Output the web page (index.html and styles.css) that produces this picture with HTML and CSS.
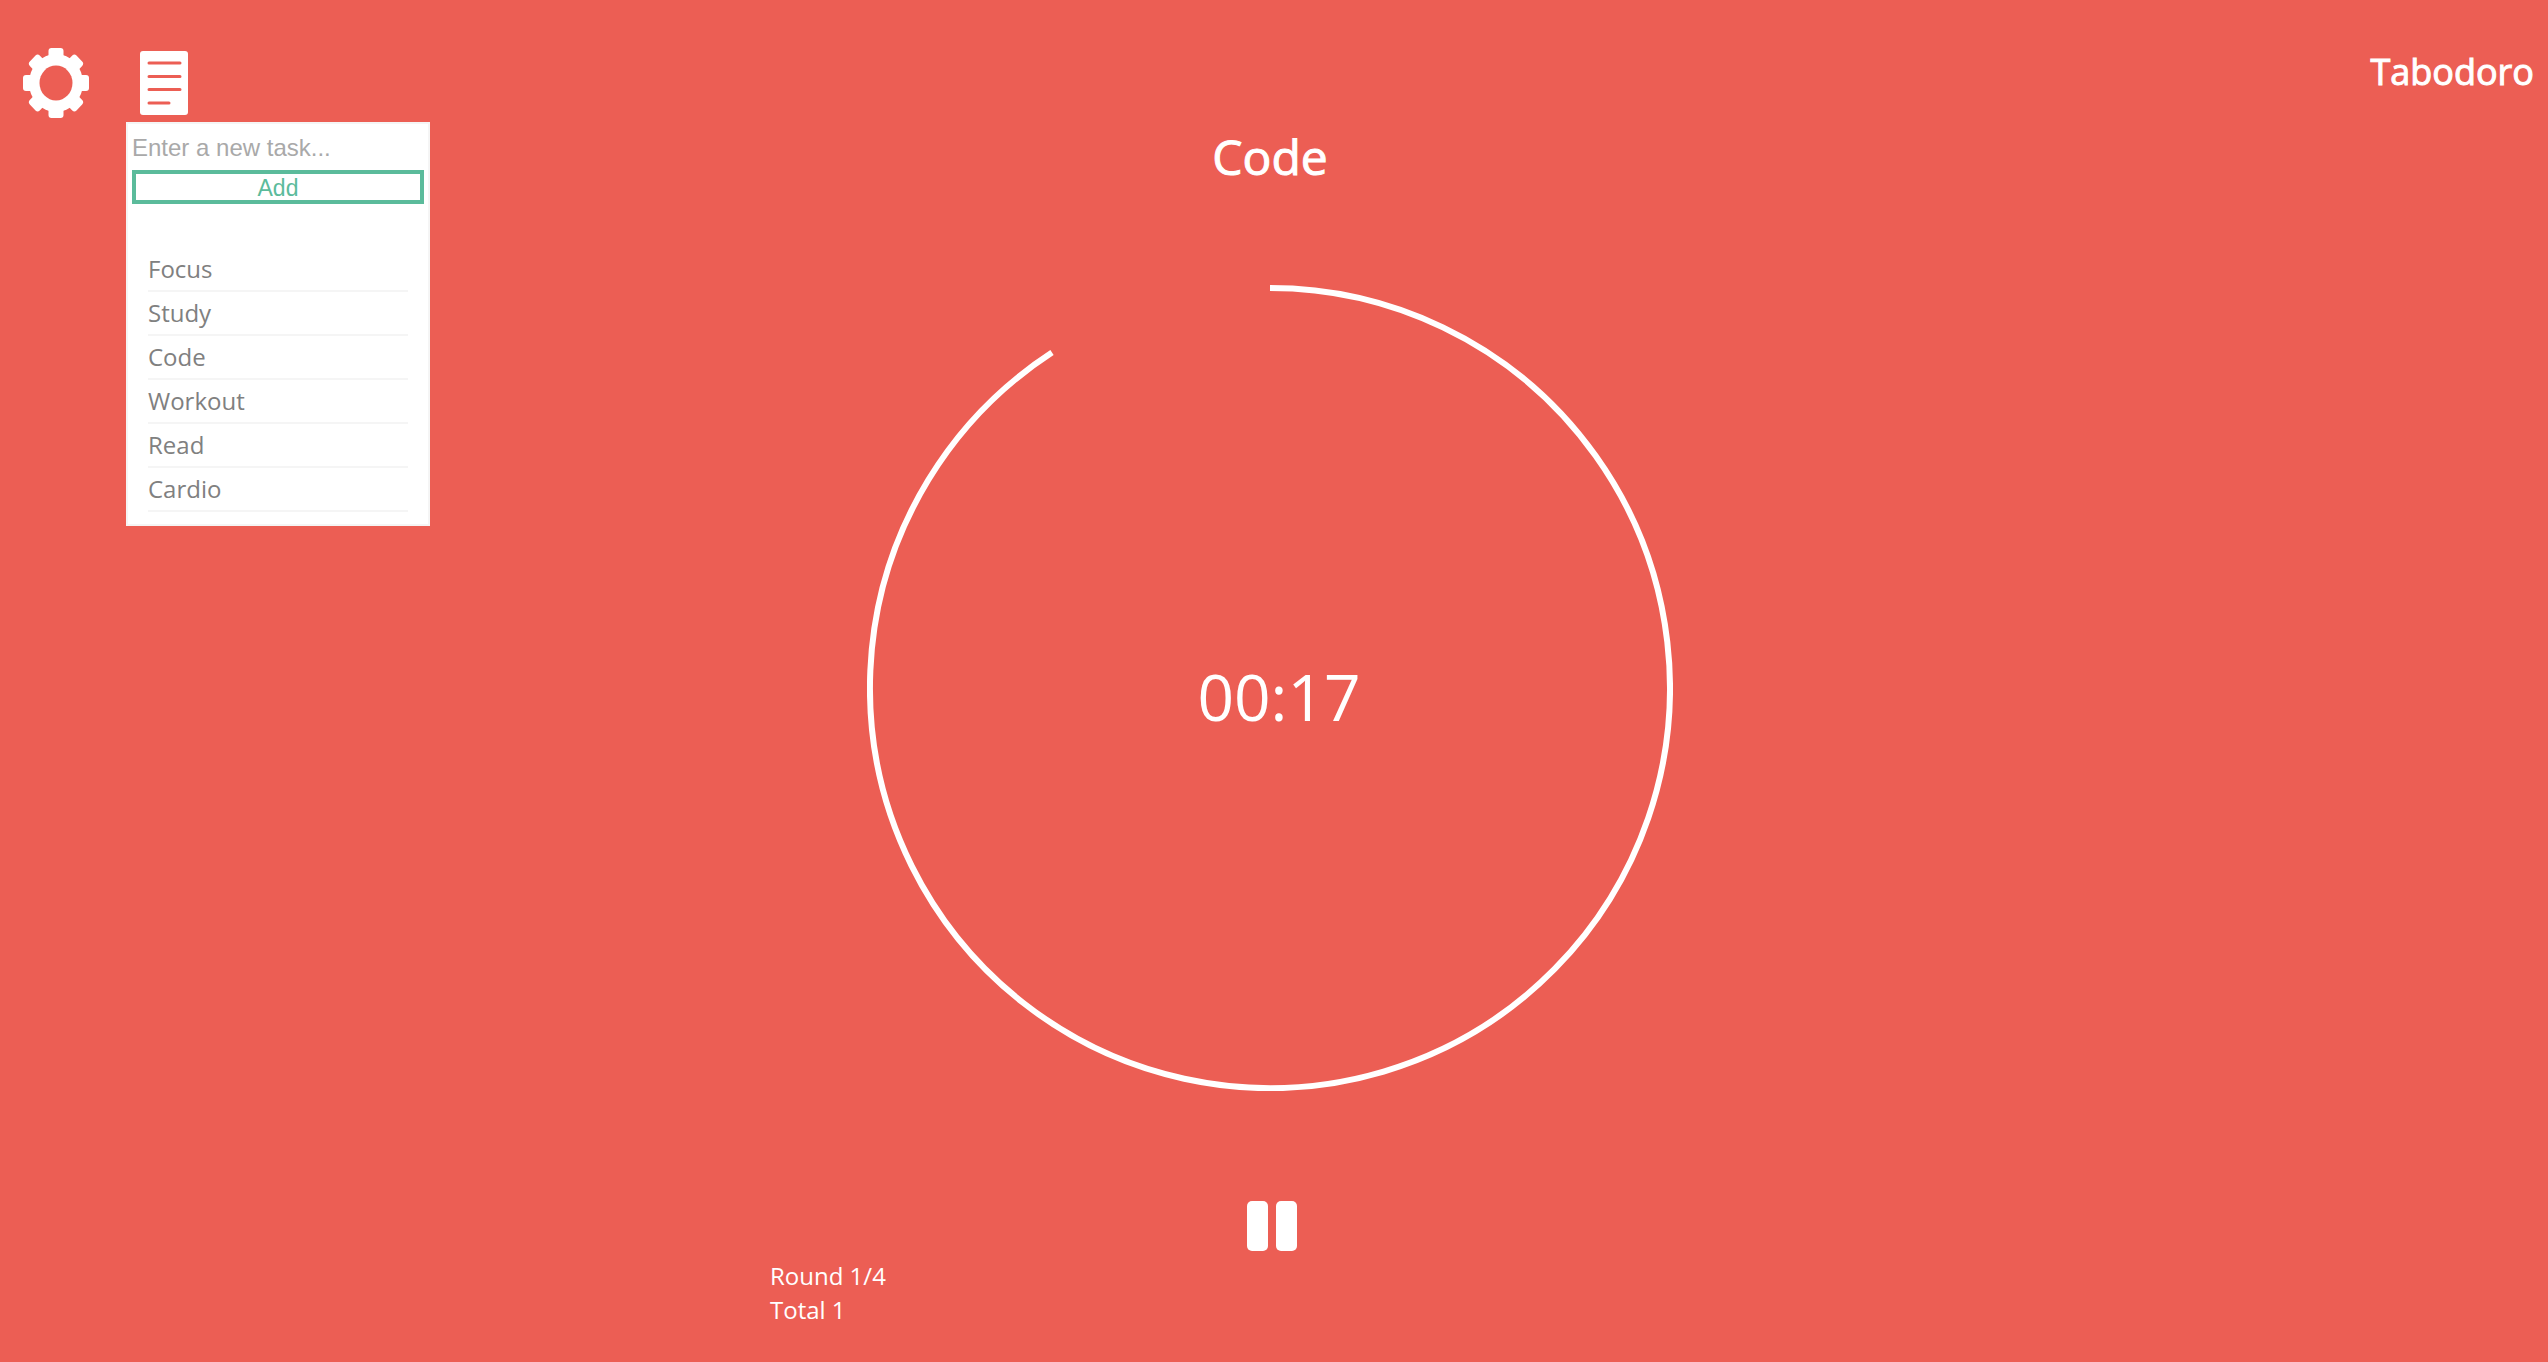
FILE: index.html
```html
<!DOCTYPE html>
<html lang="en">
<head>
<meta charset="utf-8">
<meta name="viewport" content="width=device-width, initial-scale=1">
<title>Tabodoro</title>
<link rel="stylesheet" href="styles.css">
</head>
<body>
<header class="topbar">
  <nav class="tools" aria-label="Tools">
    <button class="icon-button" type="button" aria-label="Settings">
      <svg class="gear-icon" viewBox="0 0 66 70" aria-hidden="true">
        <g fill="currentColor">
          <rect x="25.500" y="0" width="15" height="70" rx="3"/>
          <rect x="0" y="27" width="66" height="16" rx="3"/>
          <rect x="26" y="2" width="14" height="66" rx="3" transform="translate(33 35) scale(1 1.05) rotate(45) translate(-33 -35)"/>
          <rect x="26" y="2" width="14" height="66" rx="3" transform="translate(33 35) scale(1 1.05) rotate(-45) translate(-33 -35)"/>
          <ellipse cx="33" cy="35" rx="27" ry="29"/>
        </g>
        <ellipse class="cutout" cx="33" cy="35" rx="16.500" ry="17.500"/>
      </svg>
    </button>
    <div class="task-menu">
      <button class="icon-button" type="button" aria-label="Tasks" aria-expanded="true">
        <svg class="list-icon" viewBox="0 0 48 64" aria-hidden="true">
          <rect width="48" height="64" rx="3" fill="currentColor"/>
          <path class="rule" d="M9 12H40M9 25.500H40M9 38.500H40M9 52H29"/>
        </svg>
      </button>
      <section class="panel" aria-label="Tasks">
        <form class="task-form">
          <input class="task-input" type="text" aria-label="New task" placeholder="Enter a new task...">
          <button class="add-button" type="button">Add</button>
        </form>
        <ul class="task-list">
          <li class="task">Focus</li>
          <li class="task">Study</li>
          <li class="task">Code</li>
          <li class="task">Workout</li>
          <li class="task">Read</li>
          <li class="task">Cardio</li>
        </ul>
      </section>
    </div>
  </nav>
  <div class="brand">Tabodoro</div>
</header>
<main class="timer">
  <h1 class="current-task">Code</h1>
  <div class="dial">
    <svg class="ring" viewBox="0 0 806 806" aria-hidden="true">
      <path d="M403 3A400 400 0 1 1 185 67.600"/>
    </svg>
    <div class="time" role="timer">00:17</div>
  </div>
  <button class="icon-button pause" type="button" aria-label="Pause">
    <svg class="pause-icon" viewBox="0 0 50 50" aria-hidden="true">
      <rect width="21" height="50" rx="5" fill="currentColor"/>
      <rect x="29" width="21" height="50" rx="5" fill="currentColor"/>
    </svg>
  </button>
  <div class="stats">
    <div>Round 1/4</div>
    <div>Total 1</div>
  </div>
</main>
</body>
</html>
```

FILE: styles.css
```css
* {
  box-sizing: border-box;
}

body {
  margin: 0;
  min-height: 100vh;
  background: #ec5e54;
  color: #fff;
  font-family: "Open Sans", "Noto Sans", sans-serif;
  font-size: 24px;
  overflow-x: hidden;
}

.icon-button {
  display: block;
  padding: 0;
  border: 0;
  background: none;
  color: inherit;
  cursor: pointer;
}

.icon-button svg {
  display: block;
}

.topbar {
  display: flex;
  justify-content: space-between;
  align-items: flex-start;
  height: 122px;
  padding: 48px 14px 0 23px;
}

.tools {
  display: flex;
  gap: 51px;
}

.gear-icon {
  width: 66px;
  height: 70px;
}

.cutout {
  fill: #ec5e54;
}

.task-menu {
  position: relative;
  padding-top: 3px;
}

.list-icon {
  width: 48px;
  height: 64px;
}

.rule {
  fill: none;
  stroke: #ec5e54;
  stroke-width: 3;
  stroke-linecap: round;
}

.panel {
  position: absolute;
  top: 74px;
  left: -14px;
  width: 304px;
  height: 404px;
  padding: 8px 4px 0;
  border: 2px solid #f5f5f5;
  background: #fff;
  color: #808080;
}

.task-input {
  display: block;
  width: 100%;
  height: 32px;
  margin-bottom: 6px;
  padding: 0;
  border: 0;
  background: none;
  color: #808080;
  font-family: "Liberation Sans", Arial, sans-serif;
  font-size: 24px;
}

.task-input::placeholder {
  color: #a9a9a9;
}

.add-button {
  display: block;
  width: 100%;
  height: 34px;
  padding: 2px 0 0;
  border: 4px solid #5bbb9b;
  background: #fff;
  color: #5bbb9b;
  font-family: "Liberation Sans", Arial, sans-serif;
  font-size: 23px;
  line-height: 24px;
  cursor: pointer;
}

.task-list {
  margin: 44px 16px 0;
  padding: 0;
  list-style: none;
}

.task {
  height: 44px;
  border-bottom: 2px solid #f5f5f5;
  line-height: 42px;
}

.brand,
.current-task {
  font-weight: 400;
  -webkit-text-stroke: 1px currentColor;
}

.brand {
  font-size: 36px;
  line-height: 48px;
}

.timer {
  display: flex;
  flex-direction: column;
  align-items: center;
  padding-right: 8px;
}

.current-task {
  margin: 0;
  font-size: 48px;
  line-height: 70px;
}

.dial {
  display: grid;
  place-items: center;
  margin-top: 93px;
}

.ring {
  grid-area: 1 / 1;
  width: 806px;
  height: 806px;
  fill: none;
  stroke: #fff;
  stroke-width: 6;
}

.time {
  grid-area: 1 / 1;
  padding: 18px 0 0 18px;
  font-size: 64px;
  line-height: 90px;
}

.pause {
  margin: 110px 0 0 4px;
}

.pause-icon {
  width: 50px;
  height: 50px;
}

.stats {
  width: 1000px;
  max-width: 100%;
  margin-top: 8px;
  line-height: 34px;
}
```
